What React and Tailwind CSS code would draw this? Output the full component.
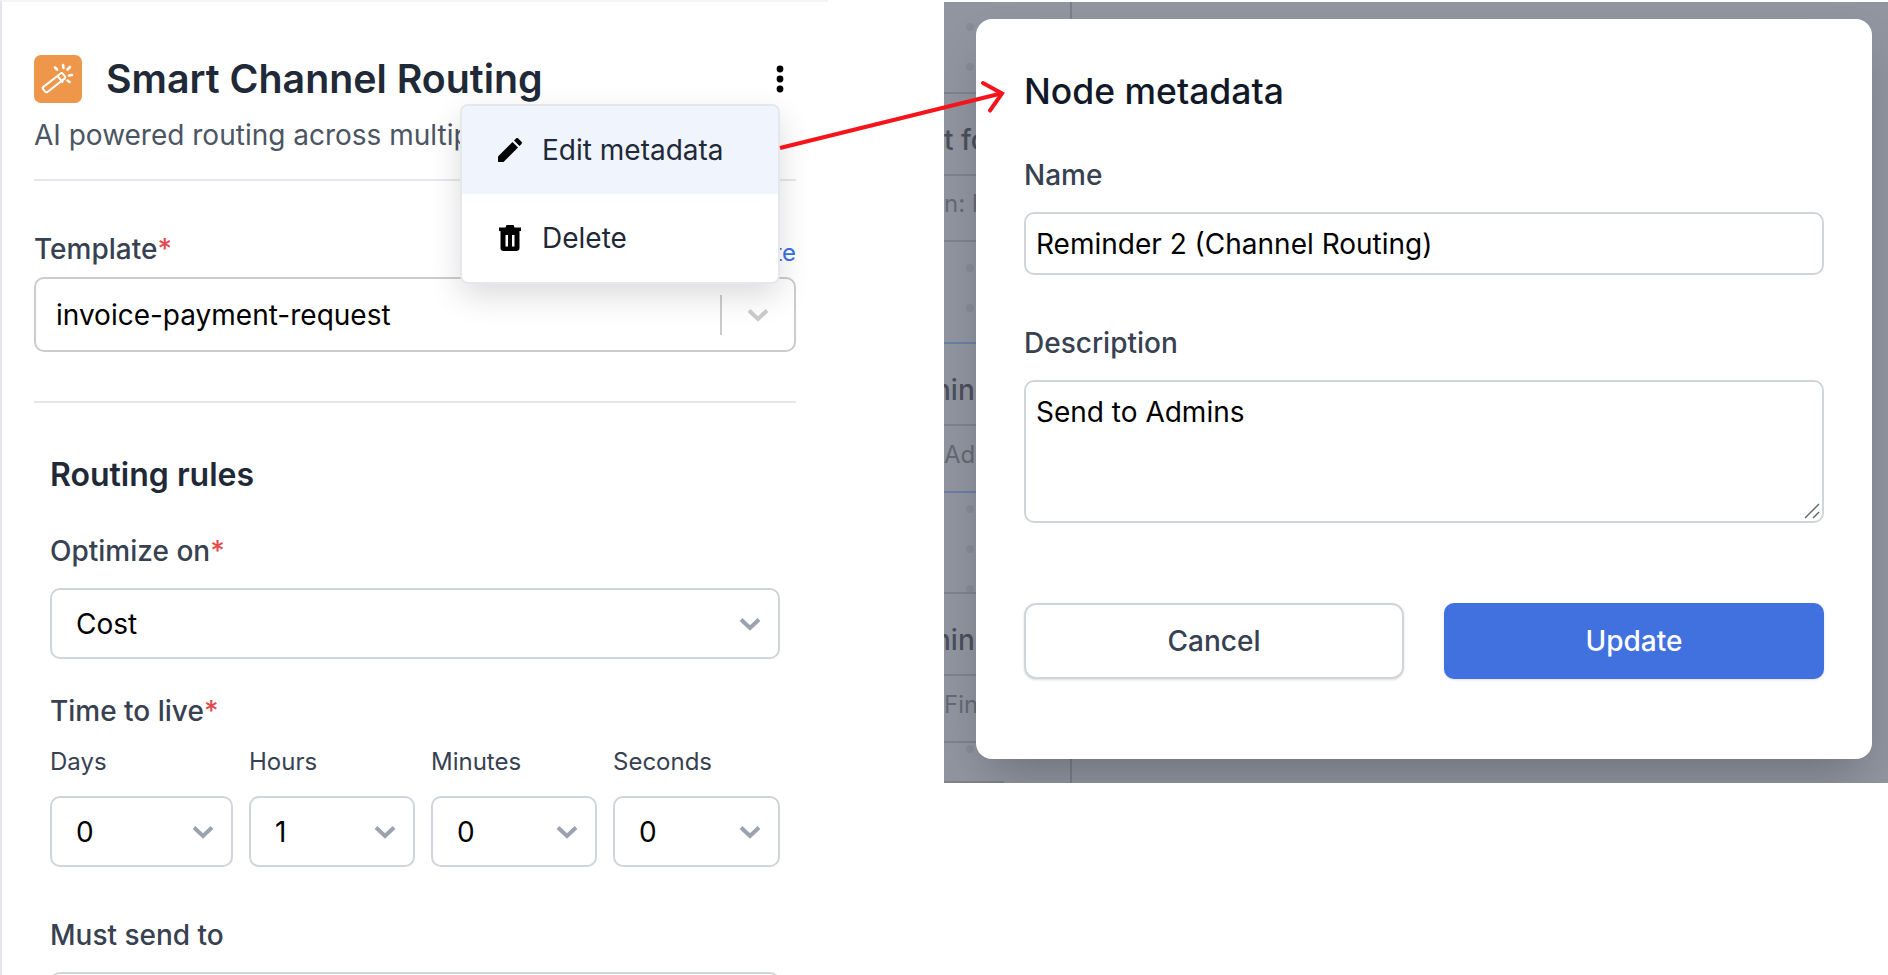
import React from "react";

const Chevron = ({ color = "#9ca3af" }) => (
  <svg width="22" height="14" viewBox="0 0 22 14" fill="none">
    <path d="M2 2.5 L11 11 L20 2.5" stroke={color} strokeWidth="4" strokeLinejoin="miter" />
  </svg>
);

const WandIcon = () => (
  <svg width="48" height="48" viewBox="0 0 48 48" fill="none" stroke="#fff" strokeWidth="2" strokeLinecap="round">
    <rect x="7.5" y="24.5" width="25" height="6.5" rx="1.6" transform="rotate(-38 20 27.75)" />
    <path d="M24 21.5 L28.5 27" />
    <path d="M21 12.5 L23 14.5" strokeWidth="2.6" />
    <path d="M29 10 L29.5 13" strokeWidth="2.6" />
    <path d="M36 12 L33.5 14.5" strokeWidth="2.6" />
    <path d="M38 20 L35 20.5" strokeWidth="2.6" />
    <path d="M35.5 27 L33.5 25.5" strokeWidth="2.6" />
  </svg>
);

const PencilIcon = () => (
  <svg width="24" height="24" viewBox="0 0 24 24" fill="#000">
    <path d="M0 24 V18.5 L14.5 4 L20 9.5 L5.5 24 Z" />
    <path d="M16 2.5 L18 0.5 C18.7 -0.1 19.6 -0.1 20.2 0.5 L23.5 3.8 C24.1 4.4 24.1 5.3 23.5 6 L21.5 8 Z" />
  </svg>
);

const TrashIcon = () => (
  <svg width="22" height="26" viewBox="0 0 22 26">
    <path
      fillRule="evenodd"
      fill="#000"
      d="M7.5 0 H14.5 L15.5 2.5 H22 V6 H20.5 V23 C20.5 24.7 19.3 26 17.5 26 H4.5 C2.7 26 1.5 24.7 1.5 23 V6 H0 V2.5 H6.5 Z M6.5 10 V21.5 H9 V10 Z M13 10 V21.5 H15.5 V10 Z"
    />
  </svg>
);

const Required = () => <span className="text-[#e5484d]">*</span>;

const FieldLabel = ({ children, className = "" }) => (
  <div className={`h-10 leading-10 text-[28px] font-medium text-[#374151] ${className}`}>{children}</div>
);

const SelectBox = ({ value, className = "" }) => (
  <div
    className={`flex items-center justify-between border-2 border-[#d1d5db] rounded-[10px] bg-white pl-6 pr-[17px] text-[28px] text-black ${className}`}
  >
    <span>{value}</span>
    <Chevron />
  </div>
);

const TTL_FIELDS = [
  { label: "Days", value: "0" },
  { label: "Hours", value: "1" },
  { label: "Minutes", value: "0" },
  { label: "Seconds", value: "0" },
];

// what is left of the page behind the dialog, only a strip of it shows
const BehindRow = ({ height, text, textClass = "", line = "border-[#7f838e]", dots = [] }) => (
  <div className={`relative border-b-2 ${line} flex items-center overflow-hidden whitespace-nowrap`} style={{ height }}>
    {text && <span className={textClass}>{text}</span>}
    {dots.map((top) => (
      <span key={top} className="absolute left-[22px] w-2 h-2 rounded-full bg-[#888c97]" style={{ top }} />
    ))}
  </div>
);

const DARK_TEXT = "mt-3 -ml-2.5 text-[28px] font-medium text-[#4b4f5b]";
const LIGHT_TEXT = "mb-2 text-[24px] text-[#656975]";

const Backdrop = () => (
  <div className="absolute inset-0 overflow-hidden">
    <div className="absolute left-[126px] top-0 bottom-0 w-0.5 bg-[#7c7f8a]" />
    <div className="w-[60px]">
      <BehindRow height={92} dots={[21, 61]} />
      <BehindRow height={82} text="t for" textClass="mt-3 text-[28px] font-medium text-[#4b4f5b]" />
      <BehindRow height={66} text="n: Fi" textClass={LIGHT_TEXT} />
      <BehindRow height={102} line="border-[#6b7ea6]" dots={[22, 62]} />
      <BehindRow height={82} text="nin" textClass={DARK_TEXT} />
      <BehindRow height={67} text="Admins" textClass={LIGHT_TEXT} line="border-[#6b7ea6]" />
      <BehindRow height={101} dots={[12, 52, 92]} />
      <BehindRow height={82} text="nin" textClass={DARK_TEXT} />
      <BehindRow height={67} text="Fin" textClass={LIGHT_TEXT} />
      <BehindRow height={40} dots={[2]} />
    </div>
  </div>
);

export default function App() {
  return (
    <div className="relative flex w-[1888px] h-[975px] overflow-hidden bg-white font-[Inter,sans-serif]">
      {/* left panel */}
      <div className="relative w-[828px] h-[975px] border-t-2 border-l-2 border-t-[#f3f4f6] border-l-[#e5e7eb] pl-8 pr-8 pt-[53px]">
        <div className="flex items-center justify-between pr-3">
          <div className="flex items-center gap-6">
            <div className="w-12 h-12 rounded-[7px] bg-[#ee9649]">
              <WandIcon />
            </div>
            <h1 className="text-[39.3px] leading-[48px] font-semibold text-[#1f2937]">Smart Channel Routing</h1>
          </div>
          <svg width="8" height="28" viewBox="0 0 8 28" fill="#000">
            <circle cx="4" cy="4" r="3.4" />
            <circle cx="4" cy="14" r="3.4" />
            <circle cx="4" cy="24" r="3.4" />
          </svg>
        </div>
        <p className="mt-[14px] h-9 leading-9 text-[28px] text-[#4b5563] whitespace-nowrap">
          AI powered routing across multiple channels
        </p>
        <div className="mt-[26px] h-0.5 bg-[#e5e7eb]" />

        <div className="mt-12 flex justify-between">
          <FieldLabel>
            Template
            <Required />
          </FieldLabel>
          <a className="mt-1 text-[24px] leading-10 text-[#3b6fe0]">Edit template</a>
        </div>
        <div className="mt-1 h-[75px] flex items-center border-2 border-[#cccccc] rounded-[10px] pl-5 text-[28px] text-black">
          <span className="flex-1">invoice-payment-request</span>
          <div className="w-0.5 h-10 bg-[#cccccc]" />
          <div className="w-[72px] flex justify-center">
            <Chevron color="#cccccc" />
          </div>
        </div>
        <div className="mt-[49px] h-0.5 bg-[#e5e7eb]" />

        <div className="mx-4">
          <h2 className="mt-[52px] h-10 leading-10 text-[32px] font-semibold text-[#1f2937]">Routing rules</h2>
          <FieldLabel className="mt-9">
            Optimize on
            <Required />
          </FieldLabel>
          <SelectBox value="Cost" className="mt-[17px] h-[71px]" />
          <FieldLabel className="mt-8">
            Time to live
            <Required />
          </FieldLabel>
          <div className="mt-4 grid grid-cols-[183px_166px_166px_167px] gap-x-4">
            {TTL_FIELDS.map((field) => (
              <div key={field.label}>
                <div className="h-[30px] leading-[30px] text-[24px] text-[#374151]">{field.label}</div>
                <SelectBox value={field.value} className="mt-[19px] h-[71px]" />
              </div>
            ))}
          </div>
          <FieldLabel className="mt-12">Must send to</FieldLabel>
          <div className="mt-[17px] h-[71px] border-2 border-[#d1d5db] rounded-[10px]" />
        </div>

        {/* dropdown menu */}
        <div className="absolute z-10 left-[458px] top-[102px] w-[320px] h-[180px] overflow-hidden rounded-lg border-2 border-[#e5e7eb] bg-white shadow-[0_12px_32px_rgba(0,0,0,0.14)]">
          <div className="h-[88px] flex items-center gap-[20px] pl-9 bg-[#eff4fd] text-[28px] text-[#1f2937]">
            <PencilIcon />
            Edit metadata
          </div>
          <div className="h-[88px] flex items-center gap-[21px] pl-[37px] text-[28px] text-[#1f2937]">
            <TrashIcon />
            Delete
          </div>
        </div>
      </div>

      <div className="w-[116px]" />

      {/* dialog over the dimmed page */}
      <div className="relative w-[944px] h-[781px] mt-0.5 overflow-hidden bg-[#9195a0] pl-8 pt-[17px]">
        <Backdrop />
        <div className="relative w-[896px] h-[740px] rounded-2xl bg-white pl-12 pr-[48px] pt-[49px] shadow-2xl">
          <h2 className="h-12 leading-[48px] text-[35.5px] font-medium text-[#111827]">Node metadata</h2>
          <FieldLabel className="mt-[39px]">Name</FieldLabel>
          <input
            readOnly
            defaultValue="Reminder 2 (Channel Routing)"
            className="mt-[17px] block w-full h-[63px] border-2 border-[#d1d5db] rounded-[10px] px-[10px] text-[28px] text-black outline-none"
          />
          <FieldLabel className="mt-12">Description</FieldLabel>
          <div className="relative mt-[17px]">
            <textarea
              readOnly
              defaultValue="Send to Admins"
              className="block w-full h-[143px] resize-none border-2 border-[#d1d5db] rounded-[10px] px-[10px] py-[9px] text-[28px] leading-[42px] text-black outline-none"
            />
            <svg className="absolute right-1 bottom-1" width="16" height="16" viewBox="0 0 16 16" fill="none" stroke="#666" strokeWidth="1.4">
              <path d="M1 15 L15 1" />
              <path d="M9 15 L15 9" />
            </svg>
          </div>
          <div className="mt-20 flex gap-10">
            <button className="w-[380px] h-[76px] border-2 border-[#d1d5db] rounded-[12px] bg-white text-[28px] font-medium text-[#374151] shadow-sm">
              Cancel
            </button>
            <button className="w-[380px] h-[76px] rounded-[10px] bg-[#4171df] text-[28px] font-medium text-white shadow-sm">
              Update
            </button>
          </div>
        </div>
      </div>

      {/* annotation arrow from the menu item to the dialog */}
      <svg className="absolute z-20 left-[770px] top-[70px]" width="245" height="90" viewBox="0 0 245 90" fill="none" stroke="#f5141c" strokeWidth="4">
        <path d="M10 78 L231 23.5" />
        <path d="M213 13 L232 23.5 L220 40.5" strokeLinecap="round" />
      </svg>
    </div>
  );
}
